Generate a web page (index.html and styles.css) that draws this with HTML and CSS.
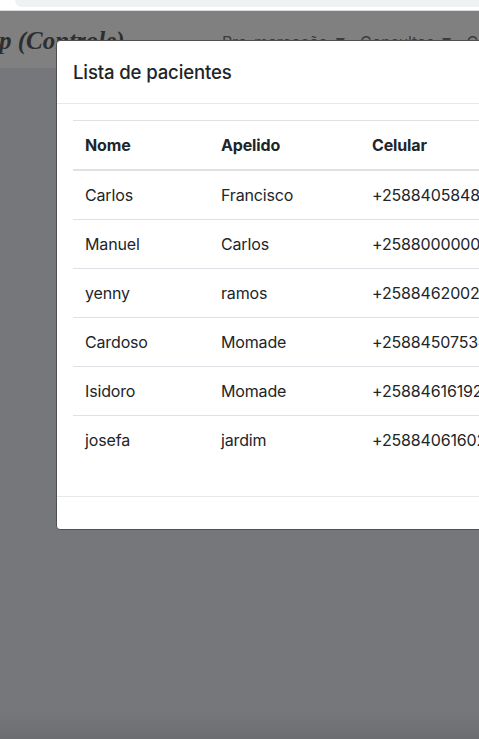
FILE: index.html
```html
<!DOCTYPE html>
<html lang="pt">
<head>
<meta charset="utf-8">
<title>Lista de pacientes</title>
<link rel="stylesheet" href="styles.css">
</head>
<body>
<div class="chrome"><div class="urlbar"></div></div>
<div class="page">
  <nav class="navbar">
    <span class="brand">p (Controle)</span>
    <ul class="nav">
      <li>Pre-marcação <span class="caret">▼</span></li>
      <li>Consultas <span class="caret">▼</span></li>
      <li>Cadastros</li>
    </ul>
  </nav>
  <main class="main"></main>
</div>
<div class="modal">
  <div class="modal-header"><h5 class="modal-title">Lista de pacientes</h5></div>
  <div class="modal-body">
    <table class="table">
      <thead>
        <tr><th class="c1">Nome</th><th class="c2">Apelido</th><th class="c3">Celular</th></tr>
      </thead>
      <tbody>
        <tr><td>Carlos</td><td>Francisco</td><td>+258840584812</td></tr>
        <tr><td>Manuel</td><td>Carlos</td><td>+258800000000</td></tr>
        <tr><td>yenny</td><td>ramos</td><td>+258846200234</td></tr>
        <tr><td>Cardoso</td><td>Momade</td><td>+258845075345</td></tr>
        <tr><td>Isidoro</td><td>Momade</td><td>+258846161923</td></tr>
        <tr><td>josefa</td><td>jardim</td><td>+258840616023</td></tr>
      </tbody>
    </table>
  </div>
  <div class="modal-footer"></div>
</div>
</body>
</html>
```
FILE: styles.css
```css
html, body {
  margin: 0;
  padding: 0;
  height: 100%;
  overflow: hidden;
}
body {
  position: relative;
  background: #ffffff;
  font-family: Inter, "Noto Sans", "Liberation Sans", sans-serif;
  color: #212529;
  display: flex;
  flex-direction: column;
  letter-spacing: -0.15px;
}
.chrome {
  height: 10px;
  background: #ffffff;
  border-bottom: 1px solid #d9d9db;
  flex: none;
}
.urlbar {
  margin-left: 15px;
  height: 7px;
  background: #f0f1f3;
  border-bottom-left-radius: 9px;
}
.page {
  flex: 1;
  display: flex;
  flex-direction: column;
}
.navbar {
  height: 57px;
  background: #808080;
  display: flex;
  align-items: center;
  flex: none;
  white-space: nowrap;
  overflow: hidden;
}
.brand {
  font-family: "Liberation Serif", "DejaVu Serif", serif;
  font-style: italic;
  font-weight: 700;
  font-size: 25px;
  color: #2e2e2e;
  margin-left: -1px;
  margin-top: 2px;
  width: 223px;
  flex: none;
  letter-spacing: 0;
}
.nav {
  display: flex;
  list-style: none;
  margin: 4px 0 0;
  padding: 0;
  gap: 15px;
  font-size: 16px;
  color: #3c3c3c;
}
.caret {
  font-size: 10px;
  margin-left: 3px;
  vertical-align: 2px;
}
.main {
  flex: 1;
  background: linear-gradient(to bottom, #76777a 0, #76777a 96%, #6c6d70 100%);
}
.modal {
  position: absolute;
  left: 56px;
  top: 40px;
  width: 500px;
  background: #ffffff;
  border: 1px solid #505050;
  border-radius: 4px;
}
.modal-header {
  padding: 16px;
  border-bottom: 1px solid #e6e8ec;
}
.modal-title {
  margin: 0;
  font-size: 18.6px;
  font-weight: 500;
  line-height: 30px;
}
.modal-body {
  padding: 16px;
}
.table {
  width: 100%;
  border-collapse: collapse;
  margin-bottom: 16px;
  font-size: 16px;
  line-height: 24px;
}
.table th,
.table td {
  padding: 12px;
  text-align: left;
  border-top: 1px solid #dee2e6;
  white-space: nowrap;
}
.table th {
  font-weight: 700;
  border-bottom: 2px solid #dee2e6;
}
.table thead + tbody tr:first-child td {
  border-top: 0;
}
.c1 { width: 112px; }
.c2 { width: 127px; }
.modal-footer {
  height: 32px;
  border-top: 1px solid #e6e8ec;
}
```
